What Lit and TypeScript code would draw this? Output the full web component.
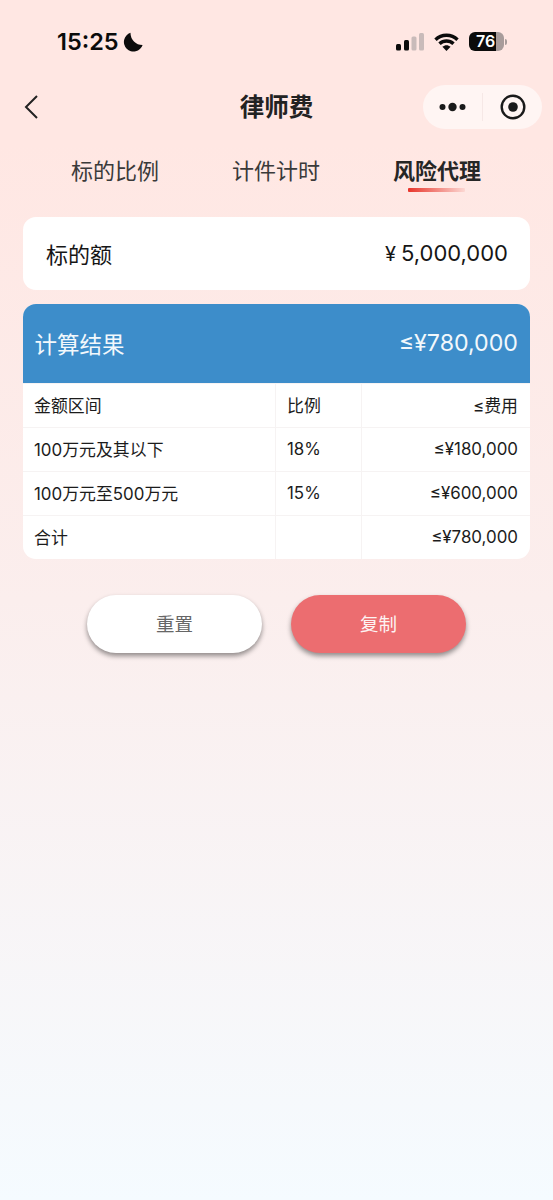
import { LitElement, html, css } from "lit";
import { customElement } from "lit/decorators.js";

const rows = [
  ["金额区间", "比例", "≤费用"],
  ["100万元及其以下", "18%", "≤¥180,000"],
  ["100万元至500万元", "15%", "≤¥600,000"],
  ["合计", "", "≤¥780,000"],
];

@customElement("app-root")
export class AppRoot extends LitElement {
  static styles = css`
    :host {
      display: block;
      width: 553px;
      height: 1200px;
      overflow: hidden;
      background: linear-gradient(180deg, #ffe7e3 0%, #ffe7e3 12%, #fbeeed 50%, #f5fbff 100%);
      font-family: "Inter", "Noto Sans CJK SC", "Liberation Sans", sans-serif;
      color: #111;
    }
    .status {
      height: 82px;
      box-sizing: border-box;
      padding: 27px 46px 0 57px;
      display: flex;
      justify-content: space-between;
      align-items: flex-start;
    }
    .time {
      display: flex;
      align-items: center;
      gap: 4px;
      font-size: 23.5px;
      line-height: 29px;
      font-weight: 600;
      color: #0b0b0b;
    }
    .sys {
      display: flex;
      align-items: center;
      gap: 10px;
      height: 29px;
    }
    .battery {
      display: flex;
      align-items: center;
      gap: 1px;
    }
    .batt-body {
      width: 35px;
      height: 19px;
      border-radius: 6px;
      overflow: hidden;
      background: linear-gradient(90deg, #0b0b0b 0 76%, #a89c9b 76% 100%);
      color: #fff;
      font-size: 16px;
      font-weight: 600;
      line-height: 19px;
      padding-left: 7px;
      box-sizing: border-box;
    }
    .batt-tip {
      width: 2px;
      height: 6px;
      border-radius: 0 2px 2px 0;
      background: #a89c9b;
    }
    .nav {
      height: 50px;
      display: flex;
      align-items: center;
      justify-content: space-between;
      padding: 0 11px 0 24px;
      position: relative;
    }
    .back {
      display: block;
    }
    .title {
      position: absolute;
      left: 0;
      right: 0;
      text-align: center;
      font-size: 24.5px;
      font-weight: 700;
      color: #222;
      line-height: 50px;
    }
    .capsule {
      width: 119px;
      height: 44px;
      border-radius: 22px;
      background: #fff5f3;
      display: flex;
      align-items: center;
      position: relative;
    }
    .cap-l {
      width: 60px;
      height: 28px;
      display: flex;
      align-items: center;
      justify-content: center;
      border-right: 1px solid #f6e8e6;
      box-sizing: border-box;
    }
    .cap-r {
      flex: 1;
      display: flex;
      align-items: center;
      justify-content: center;
    }
    .tabs {
      display: flex;
      justify-content: center;
      gap: 73px;
      margin-top: 5px;
      height: 80px;
      box-sizing: border-box;
      padding: 19px 1px 0 0;
    }
    .tab {
      font-size: 22px;
      line-height: 30px;
      color: #3a3a3a;
      position: relative;
    }
    .tab.active {
      font-weight: 700;
      color: #262626;
    }
    .tab.active::after {
      content: "";
      position: absolute;
      left: 15px;
      top: 32px;
      width: 57px;
      height: 4px;
      border-radius: 1px;
      background: linear-gradient(90deg, #e8352b, #fcd8d3);
    }
    .main {
      padding: 0 23px;
      box-sizing: border-box;
    }
    .amount {
      height: 73px;
      background: #fff;
      border-radius: 13px;
      display: flex;
      justify-content: space-between;
      align-items: center;
      padding: 0 22px 2px 23px;
      box-sizing: border-box;
      font-size: 22px;
      color: #161616;
    }
    .yen {
      margin-right: 5px;
      font-size: 20px;
    }
    .result {
      margin-top: 14px;
      border-radius: 13px;
      overflow: hidden;
      background: #fff;
    }
    .res-head {
      height: 79px;
      background: #3d8dca;
      color: #f2f8fc;
      display: flex;
      justify-content: space-between;
      align-items: center;
      padding: 0 12px 2px 11.5px;
      box-sizing: border-box;
      font-size: 22.5px;
    }
    .res-val {
      font-size: 23.2px;
    }
    .row {
      display: grid;
      grid-template-columns: 252px 86px 1fr;
      height: 44px;
      border-top: 1px solid #f6f3f3;
      box-sizing: border-box;
      font-size: 16.9px;
      color: #1c1c1c;
    }
    .row:first-of-type {
      border-top: none;
    }
    .row > div {
      display: flex;
      align-items: center;
      padding: 0 12px 2px 11px;
    }
    .row > div:nth-child(2) {
      border-left: 1px solid #f6f3f3;
    }
    .row > div:nth-child(3) {
      border-left: 1px solid #f6f3f3;
      justify-content: flex-end;
    }
    .actions {
      display: flex;
      justify-content: center;
      gap: 28.5px;
      margin-top: 36px;
    }
    .btn {
      width: 175.5px;
      height: 58px;
      border-radius: 29px;
      display: flex;
      align-items: center;
      justify-content: center;
      padding-bottom: 2px;
      box-sizing: border-box;
      font-size: 18.5px;
      box-shadow: 0 3px 5px rgba(0, 0, 0, 0.42);
    }
    .reset {
      background: #fff;
      color: #666;
    }
    .copy {
      background: #ec6d70;
      color: #fdf3f3;
    }
  `;

  render() {
    return html`
      <div class="status">
        <div class="time">
          15:25
          <svg width="20" height="20" viewBox="0 0 20 20">
            <path fill="#0b0b0b" d="M7.5 0.8 A9.6 9.6 0 1 0 19.6 13 A12 12 0 0 1 7.5 0.8 Z" />
          </svg>
        </div>
        <div class="sys">
          <svg width="28" height="18" viewBox="0 0 28 18">
            <rect x="0" y="11" width="5" height="6.5" rx="1.5" fill="#0b0b0b" />
            <rect x="8" y="7" width="5" height="10.5" rx="1.5" fill="#0b0b0b" />
            <rect x="15.5" y="3.5" width="5" height="14" rx="1.5" fill="#c9bbba" />
            <rect x="23" y="0" width="5" height="17.5" rx="1.5" fill="#c9bbba" />
          </svg>
          <svg width="25" height="18" viewBox="0 0 25 18">
            <path fill="none" stroke="#0b0b0b" stroke-width="3.4" d="M1.5 6.7 C7.5 0.8 17.5 0.8 23.5 6.7" />
            <path fill="none" stroke="#0b0b0b" stroke-width="3.4" d="M5.5 10.8 C9.5 7 15.5 7 19.5 10.8" />
            <path fill="#0b0b0b" d="M8.4 13.8 C11 11.6 14 11.6 16.6 13.8 L12.5 18 Z" />
          </svg>
          <div class="battery">
            <div class="batt-body">76</div>
            <div class="batt-tip"></div>
          </div>
        </div>
      </div>
      <div class="nav">
        <svg class="back" width="14" height="24" viewBox="0 0 14 24">
          <path d="M13 1 L2 12 L13 23" fill="none" stroke="#222" stroke-width="2" />
        </svg>
        <div class="title">律师费</div>
        <div class="capsule">
          <div class="cap-l">
            <svg width="27" height="10" viewBox="0 0 27 10">
              <circle cx="3.5" cy="5" r="3" fill="#1a1a1a" />
              <circle cx="13.5" cy="5" r="4.2" fill="#1a1a1a" />
              <circle cx="23.5" cy="5" r="3" fill="#1a1a1a" />
            </svg>
          </div>
          <div class="cap-r">
            <svg width="26" height="26" viewBox="0 0 26 26">
              <circle cx="13" cy="13" r="11.3" fill="none" stroke="#1a1a1a" stroke-width="2.4" />
              <circle cx="13" cy="13" r="4.8" fill="#1a1a1a" />
            </svg>
          </div>
        </div>
      </div>
      <div class="tabs">
        <div class="tab">标的比例</div>
        <div class="tab">计件计时</div>
        <div class="tab active">风险代理</div>
      </div>
      <div class="main">
        <div class="amount"><span>标的额</span><span><span class="yen">¥</span>5,000,000</span></div>
        <div class="result">
          <div class="res-head"><span>计算结果</span><span class="res-val">≤¥780,000</span></div>
          ${rows.map(
            (r) => html`<div class="row"><div>${r[0]}</div><div>${r[1]}</div><div>${r[2]}</div></div>`
          )}
        </div>
        <div class="actions">
          <div class="btn reset">重置</div>
          <div class="btn copy">复制</div>
        </div>
      </div>
    `;
  }
}
